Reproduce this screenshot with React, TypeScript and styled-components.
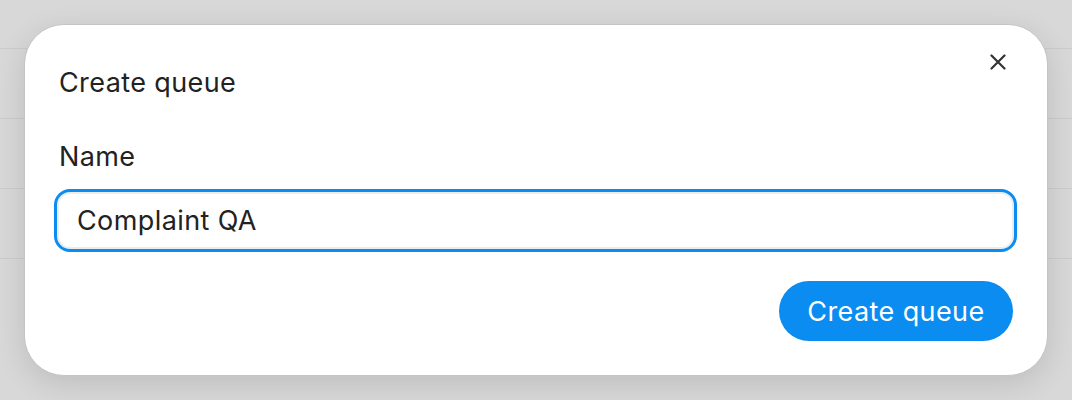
import React from 'react';
import styled, { createGlobalStyle } from 'styled-components';

const GlobalStyle = createGlobalStyle`
  html, body {
    margin: 0;
    padding: 0;
    background: #d9d9d9;
    font-family: 'Inter', 'Roboto', 'Liberation Sans', sans-serif;
  }
`;

// Fondo con las filas de la tabla que queda detrás del diálogo
const Backdrop = styled.div`
  width: 1072px;
  height: 400px;
  overflow: hidden;
  display: flex;
  flex-direction: column;
  align-items: center;
  padding-top: 24px;
  box-sizing: border-box;
  background-color: #d8d8d8;
  background-image: repeating-linear-gradient(
    to bottom,
    transparent 0px,
    transparent 48px,
    #cbcbcb 48px,
    #cbcbcb 49px,
    transparent 49px,
    transparent 70px
  );
  background-size: 100% 280px;
  background-repeat: no-repeat;
`;

const Dialog = styled.div`
  position: relative;
  width: 1024px;
  height: 352px;
  box-sizing: border-box;
  background: #fff;
  border: 1px solid #c4c4c4;
  border-radius: 40px;
  box-shadow: 0 8px 30px rgba(0, 0, 0, 0.12);
  padding: 42px 34px 0 34px;
  display: flex;
  flex-direction: column;
  align-items: flex-start;
`;

const Title = styled.h2`
  margin: 0;
  font-size: 27px;
  line-height: 32px;
  font-weight: 400;
  letter-spacing: 0.4px;
  color: #222;
`;

const CloseButton = styled.button`
  position: absolute;
  top: 29px;
  right: 41px;
  width: 16px;
  height: 16px;
  padding: 0;
  border: none;
  background: none;
  cursor: pointer;
  display: flex;
`;

const Label = styled.label`
  margin-top: 42px;
  font-size: 27px;
  line-height: 32px;
  font-weight: 400;
  letter-spacing: 0.4px;
  color: #222;
`;

const Input = styled.input`
  margin: 16px 0 0 -5px;
  width: 963px;
  height: 63px;
  flex-shrink: 0;
  box-sizing: border-box;
  border: 3px solid #0a8cf0;
  box-shadow: inset 0 0 0 2px #ececec;
  border-radius: 16px;
  padding: 0 20px;
  font-family: inherit;
  font-size: 27px;
  letter-spacing: 0.4px;
  color: #222;
  background: #fff;
  outline: none;
`;

const Footer = styled.div`
  align-self: stretch;
  display: flex;
  justify-content: flex-end;
  margin-top: 29px;
`;

const PrimaryButton = styled.button`
  height: 60px;
  width: 234px;
  padding: 0;
  border: none;
  border-radius: 30px;
  background: #0a8cf0;
  color: #fff;
  font-family: inherit;
  font-size: 27px;
  letter-spacing: 0.4px;
  font-weight: 400;
  cursor: pointer;
`;

const App: React.FC = () => {
  return (
    <>
      <GlobalStyle />
      <Backdrop>
        <Dialog>
          <Title>Create queue</Title>
          <CloseButton aria-label="Close">
            <svg width="16" height="16" viewBox="0 0 16 16">
              <path d="M1.5 1.5 L14.5 14.5 M14.5 1.5 L1.5 14.5" stroke="#333" strokeWidth="2.2" strokeLinecap="round" />
            </svg>
          </CloseButton>
          <Label htmlFor="queue-name">Name</Label>
          <Input id="queue-name" defaultValue="Complaint QA" />
          <Footer>
            <PrimaryButton>Create queue</PrimaryButton>
          </Footer>
        </Dialog>
      </Backdrop>
    </>
  );
};

export default App;
